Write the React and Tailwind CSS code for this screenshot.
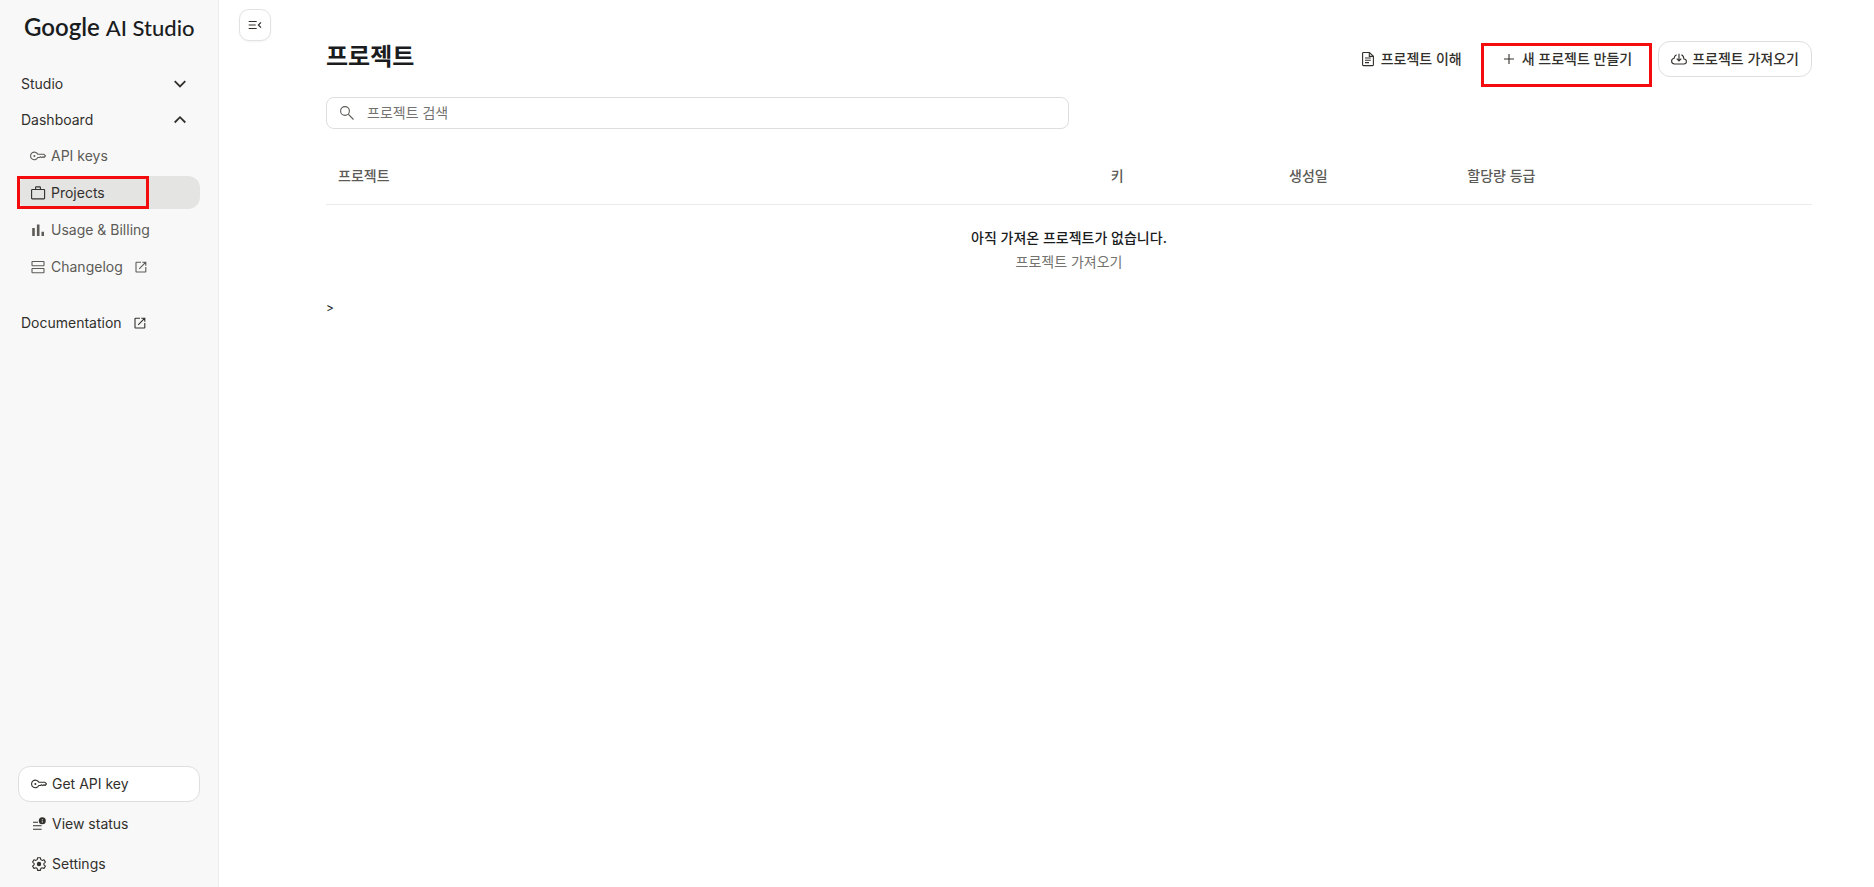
const strokeProps = {
  fill: "none",
  stroke: "currentColor",
  strokeWidth: 1.1,
  "aria-hidden": true,
};

function Icon({ children, className = "size-4 shrink-0", ...rest }) {
  return (
    <svg viewBox="0 0 16 16" className={className} {...strokeProps} {...rest}>
      {children}
    </svg>
  );
}

const KeyIcon = () => (
  <Icon>
    <path d="M7.8 6.3A3.800 3.800 0 1 0 7.800 9.500h1.800l1-.8 1.2.9 1.2-.9 1 .8 1.500-1.600-1.500-1.600z" strokeLinejoin="round" />
    <circle cx="4.4" cy="7.9" r="1" fill="currentColor" stroke="none" />
  </Icon>
);

const BriefcaseIcon = () => (
  <Icon>
    <rect x="1.6" y="4.500" width="13" height="9.400" rx="0.600" />
    <path d="M5.6 4.5V2.6a.7.7 0 0 1 .7-.7h3.4a.7.7 0 0 1 .7.7v1.9" />
  </Icon>
);

const BarsIcon = () => (
  <Icon fill="currentColor" stroke="none">
    <path d="M2.2 6h2.6v8H2.2zM6.9 2.5h2.6V14H6.9zM11.5 9.8H14V14h-2.5z" />
  </Icon>
);

const ChangelogIcon = () => (
  <Icon>
    <rect x="2" y="2.500" width="12" height="4.200" rx="0.400" />
    <rect x="2" y="9.500" width="12" height="4.200" rx="0.400" />
  </Icon>
);

const ExternalIcon = () => (
  <Icon>
    <path d="M8 3.200H3.500a.5.5 0 0 0-.5.5v8.800a.5.5 0 0 0 .5.5h8.800a.5.5 0 0 0 .5-.5V8M9.300 3.200h3.500v3.500M12.800 3.200 6.200 9.800" />
  </Icon>
);

const StatusIcon = () => (
  <Icon>
    <path d="M2 6.3h5M2 9.8h8.6M2 13.3h8.6" />
    <circle cx="11.3" cy="4.8" r="3.5" fill="currentColor" stroke="none" />
    <path d="M11.3 4.6v2M11.3 3v.9" stroke="#f8f8f8" strokeWidth="0.8" />
  </Icon>
);

const GearIcon = () => (
  <Icon>
    <path
      d="M6.600 1.700h2.800l.4 1.900 1.300.8 1.900-.7 1.400 2.400-1.500 1.300v1.400l1.500 1.300-1.400 2.300-1.900-.6-1.300.7-.4 1.900H6.600l-.4-1.900-1.300-.7-1.900.6-1.400-2.300 1.500-1.300V7.400l-1.500-1.300L3 3.700l1.900.7 1.300-.8z"
      strokeLinejoin="round"
    />
    <circle cx="8" cy="8" r="2.200" fill="currentColor" stroke="none" />
  </Icon>
);

const DocIcon = () => (
  <Icon>
    <path d="M2.600 2.300a.8.8 0 0 1 .8-.8h6L13.400 5.300v8.500a.8.8 0 0 1-.8.8H3.400a.8.8 0 0 1-.8-.8z" />
    <path d="M9.300 1.600v3.800h4M5 7h5.800M5 9.300h5.800M5 11.600h4" />
  </Icon>
);

const PlusIcon = () => (
  <Icon>
    <path d="M8 3v10M3 8h10" />
  </Icon>
);

const CloudIcon = () => (
  <Icon>
    <path d="M5.600 3.700C3.900 4.400 3.200 5.800 3.100 7.300 1.600 7.600.6 8.700.6 10.100c0 1.600 1.300 2.900 2.900 2.900h9.300c1.500 0 2.600-1.100 2.600-2.500s-1.100-2.400-2.500-2.500c0-2-.9-3.600-2.500-4.300" />
    <path d="M8 2.800v7M5.700 7.700 8 10l2.300-2.300" />
  </Icon>
);

const SearchIcon = () => (
  <Icon>
    <circle cx="6" cy="6" r="4.400" />
    <path d="m9.200 9.200 5.300 5.300" />
  </Icon>
);

const MenuCloseIcon = () => (
  <Icon strokeWidth="1.200">
    <path d="M1.700 4.500h8M1.700 8h7M1.700 11.500h8M14 5.400 11.400 8l2.600 2.600" />
  </Icon>
);

const Chevron = ({ up }) => (
  <Icon strokeWidth="1.800">
    <path d={up ? "M2.700 10.500 8 5.200l5.300 5.300" : "M2.700 5.200 8 10.500l5.300-5.300"} />
  </Icon>
);

const navItems = [
  { label: "API keys", icon: KeyIcon },
  { label: "Projects", icon: BriefcaseIcon, active: true },
  { label: "Usage & Billing", icon: BarsIcon },
  { label: "Changelog", icon: ChangelogIcon, external: true },
];

function Sidebar() {
  return (
    <aside className="flex w-[219px] shrink-0 flex-col border-r border-[#ebebeb] bg-[#f8f8f8] px-[18px] text-sm text-[#32302c]">
      <div className="flex h-[66px] items-baseline gap-[6px] pt-[11px] pl-[6px] font-['Lato','Liberation_Sans',sans-serif] leading-8 whitespace-nowrap text-[#1a1c1e]">
        <span className="text-2xl leading-8 font-semibold">Google</span>
        <span className="text-[22px] font-medium">AI Studio</span>
      </div>

      <button type="button" aria-expanded="false" className="flex h-9 items-center justify-between pr-3 pl-[3px]">
        Studio
        <Chevron />
      </button>
      <button type="button" aria-expanded="true" className="flex h-9 items-center justify-between pr-3 pl-[3px]">
        Dashboard
        <Chevron up />
      </button>

      <nav aria-label="Dashboard" className="mt-px flex flex-col gap-1">
        {navItems.map(({ label, icon: ItemIcon, active, external }) => (
          <a
            key={label}
            href="#"
            aria-current={active ? "page" : undefined}
            className={
              active
                ? "relative flex h-[33px] items-center gap-[5px] rounded-xl bg-[#e4e4e2] pl-3"
                : "flex h-[33px] items-center gap-[5px] pl-3 text-[#5c5b57]"
            }
          >
            <ItemIcon />
            {label}
            {external && (
              <span className="ml-[5px]">
                <ExternalIcon />
              </span>
            )}
            {active && <span className="absolute inset-y-0 -left-px w-[132px] border-[3px] border-[#f40b0b]" />}
          </a>
        ))}
      </nav>

      <a href="#" className="mt-[22px] flex h-9 items-center gap-[10px] pl-[3px]">
        Documentation
        <ExternalIcon />
      </a>

      <div className="mt-auto flex flex-col gap-1 pb-[5px]">
        <button type="button" className="flex h-9 items-center gap-[5px] rounded-xl border border-[#dededc] bg-white pl-3">
          <KeyIcon />
          Get API key
        </button>
        <a href="#" className="flex h-9 items-center gap-[5px] border border-transparent pl-3">
          <StatusIcon />
          View status
        </a>
        <button type="button" className="flex h-9 items-center gap-[5px] border border-transparent pl-3">
          <GearIcon />
          Settings
        </button>
      </div>
    </aside>
  );
}

export default function App() {
  return (
    <div className="flex min-h-screen bg-white font-['Inter','Noto_Sans_CJK_KR',sans-serif] text-[#1a1c1e]">
      <Sidebar />
      <div className="px-5 pt-[9px]">
        <button
          type="button"
          aria-label="Collapse navigation"
          className="flex size-8 items-center justify-center rounded-[10px] border border-[#e2e2e0] bg-white text-[#32302c] shadow-xs"
        >
          <MenuCloseIcon />
        </button>
      </div>

      <main className="min-w-0 flex-1 pt-[41px] pr-[62px] pl-[35px] text-sm">
        <div className="flex items-start justify-between">
          <h1 className="text-2xl leading-8 font-bold">프로젝트</h1>
          <div className="flex text-[#32302c]">
            <a href="#" className="flex h-9 items-center gap-[5px] pr-[19px] font-medium">
              <DocIcon />
              프로젝트 이해
            </a>
            <div className="relative">
              <button type="button" className="flex h-9 items-center gap-[5px] px-5 font-medium">
                <PlusIcon />
                새 프로젝트 만들기
              </button>
              <span className="absolute inset-x-0 top-[2px] h-11 border-[3px] border-[#f40b0b]" />
            </div>
            <button
              type="button"
              className="ml-[6px] flex h-9 items-center gap-[5px] rounded-xl border border-[#dededc] px-3 font-medium"
            >
              <CloudIcon />
              프로젝트 가져오기
            </button>
          </div>
        </div>

        <label className="mt-5 flex h-8 w-1/2 items-center gap-3 rounded-lg border border-[#dededc] px-3 text-[#5c5b57]">
          <SearchIcon />
          <input
            type="search"
            aria-label="프로젝트 검색"
            placeholder="프로젝트 검색"
            className="min-w-0 flex-1 bg-transparent outline-none placeholder:text-[#73726e]"
          />
        </label>

        <table className="mt-[19px] w-full table-fixed">
          <thead>
            <tr className="h-14 border-b border-[#ebebea] text-left text-[#5c5b57]">
              <th className="w-[52%] px-3 font-medium">프로젝트</th>
              <th className="w-[12%] px-3 font-medium">키</th>
              <th className="w-[12%] px-3 font-medium">생성일</th>
              <th className="w-[24%] px-3 font-medium">할당량 등급</th>
            </tr>
          </thead>
          <tbody>
            <tr>
              <td colSpan={4} className="pt-[21px] text-center leading-6">
                <p className="font-medium">아직 가져온 프로젝트가 없습니다.</p>
                <p className="text-[#73726e]">프로젝트 가져오기</p>
              </td>
            </tr>
          </tbody>
        </table>
        <p className="mt-[22px] text-xs leading-6">&gt;</p>
      </main>
    </div>
  );
}
